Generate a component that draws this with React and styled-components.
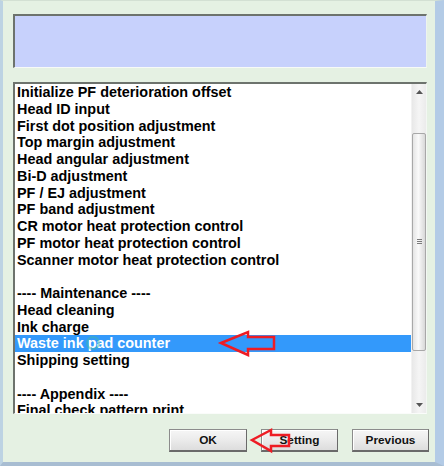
import React from 'react';
import styled, { createGlobalStyle } from 'styled-components';

const ROW_HEIGHT = 16.75;

const ITEMS = [
  'Initialize PF deterioration offset',
  'Head ID input',
  'First dot position adjustment',
  'Top margin adjustment',
  'Head angular adjustment',
  'Bi-D adjustment',
  'PF / EJ adjustment',
  'PF band adjustment',
  'CR motor heat protection control',
  'PF motor heat protection control',
  'Scanner motor heat protection control',
  '',
  '---- Maintenance ----',
  'Head cleaning',
  'Ink charge',
  'Waste ink pad counter',
  'Shipping setting',
  '',
  '---- Appendix ----',
  'Final check pattern print',
];

const SELECTED = 15;

const GlobalStyle = createGlobalStyle`
  html, body {
    margin: 0;
    padding: 0;
    background: #e5f1e3;
  }
`;

const Window = styled.div`
  position: relative;
  display: flex;
  flex-direction: column;
  width: 444px;
  height: 466px;
  box-sizing: border-box;
  padding: 13px 8px 0 10px;
  background: #e5f1e3;
  border-top: 1px solid #d3e0d3;
  border-left: 3px solid #bdd3e3;
  border-right: 9px solid #b3cbe6;
  border-bottom: 4px solid #a8bdd2;
  font-family: 'Liberation Sans', Arial, sans-serif;
`;

const InfoPanel = styled.div`
  height: 54px;
  box-sizing: border-box;
  background: #c7d1fc;
  border-top: 2px solid #6d736d;
  border-left: 2px solid #6d736d;
  border-right: 1px solid #eef4ee;
  border-bottom: 1px solid #f7faf7;
`;

const ListBox = styled.div`
  display: flex;
  height: 332px;
  margin-top: 14px;
  box-sizing: border-box;
  background: #fff;
  border-top: 2px solid #6d736d;
  border-left: 2px solid #6d736d;
  border-right: 1px solid #f3f7f3;
  border-bottom: 1px solid #fafcfa;
`;

const Rows = styled.div`
  flex: 1;
  overflow: hidden;
`;

const Row = styled.div`
  height: ${ROW_HEIGHT}px;
  line-height: ${ROW_HEIGHT}px;
  padding-left: 2px;
  white-space: pre;
  font-size: 14.4px;
  font-weight: bold;
  color: ${(p) => (p.$selected ? '#fff' : '#000')};
  background: ${(p) => (p.$selected ? '#3399fb' : 'transparent')};
`;

const Scrollbar = styled.div`
  display: flex;
  flex-direction: column;
  width: 14px;
  background: linear-gradient(to right, #e8e8e8, #f5f5f5 50%, #ebebeb);
  border-left: 1px solid #f2f2f2;
`;

const ArrowButton = styled.div`
  display: flex;
  align-items: center;
  justify-content: center;
  height: 16px;
`;

const Track = styled.div`
  flex: 1;
  position: relative;
`;

const Thumb = styled.div`
  position: absolute;
  left: 0;
  right: 0;
  display: flex;
  align-items: center;
  justify-content: center;
  box-sizing: border-box;
  border: 1px solid #a8a8a8;
  border-radius: 2px;
  background: linear-gradient(to right, #e4e4e4, #fafafa 45%, #d8d8d8);
`;

const Grip = styled.div`
  width: 5px;
  height: 6px;
  background: repeating-linear-gradient(
    to bottom,
    #7a7a7a 0,
    #7a7a7a 1px,
    transparent 1px,
    transparent 2px
  );
`;

const ButtonRow = styled.div`
  display: flex;
  justify-content: flex-end;
  gap: 14px;
  margin-top: 15px;
  margin-right: -2px;
`;

const Button = styled.button`
  width: ${(p) => p.$width || 77}px;
  height: 23px;
  padding: 0;
  box-sizing: border-box;
  font-family: 'Liberation Sans', Arial, sans-serif;
  font-size: 11.8px;
  font-weight: bold;
  color: #111;
  background: linear-gradient(to bottom, #f6f6f6, #ebebeb 50%, #dddddd);
  border: 1px solid #8c8c8c;
  border-right-color: #6a6a6a;
  border-bottom: 2px solid #6a6a6a;
  box-shadow: inset 1px 1px 0 #ffffff;
`;

const Overlay = styled.svg`
  position: absolute;
  left: -3px;
  top: -1px;
  pointer-events: none;
`;

function Triangle({ up }) {
  return (
    <svg width="7" height="4" viewBox="0 0 7 4">
      <polygon
        points={up ? '3.5,0 7,4 0,4' : '0,0 7,0 3.5,4'}
        fill="#555"
      />
    </svg>
  );
}

export default function App() {
  const visible = 329 / ROW_HEIGHT;
  const thumbTop = 33;
  const thumbHeight = Math.round((visible / (ITEMS.length + 9)) * 298 * 1.08);

  return (
    <>
      <GlobalStyle />
      <Window>
        <InfoPanel />
        <ListBox>
          <Rows>
            {ITEMS.map((text, i) => (
              <Row key={i} $selected={i === SELECTED}>
                {text || ' '}
              </Row>
            ))}
          </Rows>
          <Scrollbar>
            <ArrowButton>
              <Triangle up />
            </ArrowButton>
            <Track>
              <Thumb style={{ top: thumbTop, height: thumbHeight }}>
                <Grip />
              </Thumb>
            </Track>
            <ArrowButton>
              <Triangle />
            </ArrowButton>
          </Scrollbar>
        </ListBox>
        <ButtonRow>
          <Button $width={78}>OK</Button>
          <Button>Setting</Button>
          <Button>Previous</Button>
        </ButtonRow>
        <Overlay width="444" height="466" viewBox="0 0 444 466">
          <circle cx="93" cy="343" r="6" fill="none" stroke="#3fb8a8" strokeOpacity="0.5" strokeWidth="2" />
          <polygon
            points="221,343 248,332 248,337 274,337 274,349 248,349 248,355"
            fill="none"
            stroke="#ee1c24"
            strokeWidth="2.5"
            strokeLinejoin="miter"
          />
          <polygon
            points="252,440 271,430 271,435 289,435 289,446 271,446 271,451"
            fill="none"
            stroke="#ee1c24"
            strokeWidth="2.5"
            strokeLinejoin="miter"
          />
        </Overlay>
      </Window>
    </>
  );
}
